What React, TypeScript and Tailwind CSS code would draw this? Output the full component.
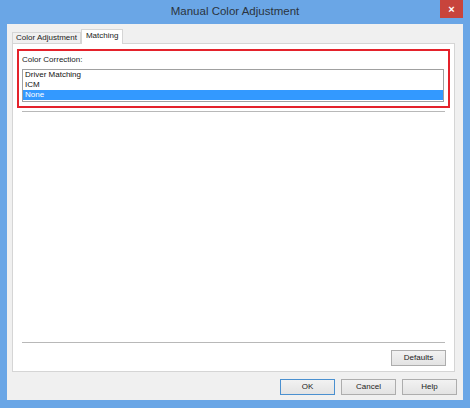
import React from "react";

const font = { fontFamily: '"Liberation Sans", Arial, sans-serif' };

const DialogButton = ({ label, primary }: { label: string; primary?: boolean }) => (
  <button
    className={`w-[55px] h-[16px] text-[8px] leading-none text-[#222] bg-gradient-to-b from-[#f2f2f2] to-[#e3e3e3] border ${
      primary ? "border-[#4a90d0]" : "border-[#adadad]"
    }`}
  >
    {label}
  </button>
);

export default function App() {
  return (
    <div className="w-[470px] h-[408px] bg-[#6aa6e6] flex flex-col px-[7px] pb-[8px]" style={font}>
      {/* title bar */}
      <div className="h-[24px] grid grid-cols-[1fr_auto_1fr] items-start">
        <div />
        <div className="pt-[6px] text-[11.5px] leading-none text-[#2b3440]">Manual Color Adjustment</div>
        <div className="flex justify-end">
          <div className="w-[23px] h-[18px] bg-[#c8443c] flex items-center justify-center text-white text-[11px] font-bold leading-none">
            ×
          </div>
        </div>
      </div>

      {/* client area */}
      <div className="flex-1 bg-[#f0f0f0] flex flex-col pt-[5px]">
        {/* tab strip */}
        <div className="flex items-end ml-[5px] h-[14px] relative z-10">
          <div className="h-[11px] px-[3px] border border-b-0 border-[#d5d5d5] bg-[#f0f0f0] text-[8px] leading-[10px] text-[#222]">
            Color Adjustment
          </div>
          <div className="h-[15px] px-[4px] border border-b-0 border-[#d5d5d5] bg-white text-[8px] leading-[11px] text-[#222] -mb-px">
            Matching
          </div>
        </div>

        {/* tab panel */}
        <div className="ml-[5px] mr-[8px] h-[329px] bg-white border border-[#d5d5d5] flex flex-col px-[4px] pt-[5px] pb-[5px]">
          <div className="border-2 border-[#e4222b] h-[59px] flex flex-col px-[3px] pt-[4px]">
            <div className="text-[8px] leading-[9px] text-[#222]">Color Correction:</div>
            <div className="mt-[5px] border border-[#a0a0a0] h-[33px] mr-[1px] text-[8px] leading-[10px] text-[#111]">
              <div className="px-[2px]">Driver Matching</div>
              <div className="px-[2px]">ICM</div>
              <div className="px-[2px] bg-[#3399ff] text-white">None</div>
            </div>
          </div>
          <div className="mt-[3px] mx-[5px] h-px bg-[#b8b8b8]" />

          <div className="flex-1" />

          <div className="mx-[5px] h-px bg-[#b8b8b8]" />
          <div className="flex justify-end mt-[7px] mr-[4px]">
            <DialogButton label="Defaults" />
          </div>
        </div>

        {/* footer buttons */}
        <div className="flex justify-end gap-[6px] mt-[7px] mr-[6px]">
          <DialogButton label="OK" primary />
          <DialogButton label="Cancel" />
          <DialogButton label="Help" />
        </div>
      </div>
    </div>
  );
}
